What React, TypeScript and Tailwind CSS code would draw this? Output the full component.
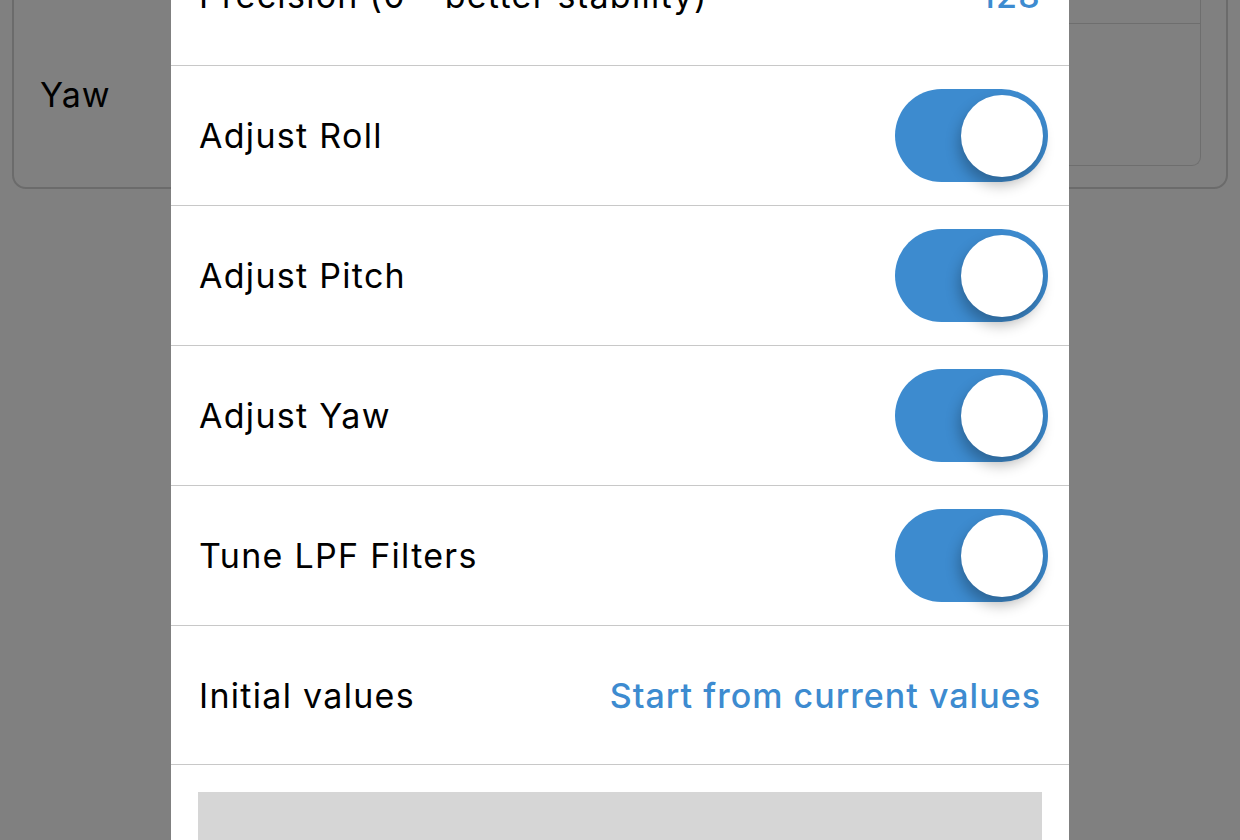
import { useState } from "react";

const font = { fontFamily: "Inter, 'Noto Sans', sans-serif" };

function Toggle({ on, onChange }: { on: boolean; onChange: () => void }) {
  return (
    <button
      onClick={onChange}
      className={`relative flex h-[93px] w-[153px] items-center rounded-full px-[5px] ${on ? "justify-end bg-[#3d8bcf]" : "justify-start bg-[#e5e5e5]"}`}
    >
      <span className="block size-[82px] rounded-full bg-white shadow-[-2px_8px_14px_rgba(0,0,0,0.28)]" />
    </button>
  );
}

type Row = { key: string; label: string };

const toggles: Row[] = [
  { key: "roll", label: "Adjust Roll" },
  { key: "pitch", label: "Adjust Pitch" },
  { key: "yaw", label: "Adjust Yaw" },
  { key: "lpf", label: "Tune LPF Filters" },
];

export default function App() {
  const [state, setState] = useState<Record<string, boolean>>({ roll: true, pitch: true, yaw: true, lpf: true });

  return (
    <div className="relative h-[840px] w-[1240px] overflow-hidden bg-[#808080]" style={font}>
      {/* dimmed page behind the sheet */}
      <div className="mx-[12px] mt-[-200px] flex h-[389px] rounded-[14px] border-2 border-[#6b6b6b] pr-[25px]">
        <div className="flex flex-1 items-end">
          <div className="mb-[67px] ml-[26px] text-[34px] tracking-[0.03em] text-black">Yaw</div>
        </div>
        <div className="mb-[21px] flex w-[700px] flex-col rounded-b-[9px] border border-t-0 border-[#6e6e6e]">
          <div className="h-[222px] border-b border-[#6e6e6e]" />
          <div className="flex-1" />
        </div>
      </div>

      {/* sheet */}
      <div className="absolute left-[171px] top-[-74px] w-[898px] bg-white text-[34px] tracking-[0.038em]">
        <div className="flex h-[140px] items-center justify-between border-b border-[#c8c8c8] px-[28px]">
          <span className="text-black">Precision (0 - better stability)</span>
          <span className="font-medium text-[#3d8bd0]">128</span>
        </div>
        {toggles.map((t) => (
          <div key={t.key} className="flex h-[140px] items-center justify-between border-b border-[#c8c8c8] pl-[28px] pr-[21px]">
            <span className="text-black">{t.label}</span>
            <Toggle on={state[t.key]} onChange={() => setState((s) => ({ ...s, [t.key]: !s[t.key] }))} />
          </div>
        ))}
        <div className="flex h-[139px] items-center justify-between border-b border-[#c8c8c8] px-[28px]">
          <span className="text-black">Initial values</span>
          <button className="font-medium tracking-[0.03em] text-[#3d8bd0]">Start from current values</button>
        </div>
        <div className="px-[27px] pt-[27px]">
          <div className="h-[200px] bg-[#d6d6d6]" />
        </div>
      </div>
    </div>
  );
}
